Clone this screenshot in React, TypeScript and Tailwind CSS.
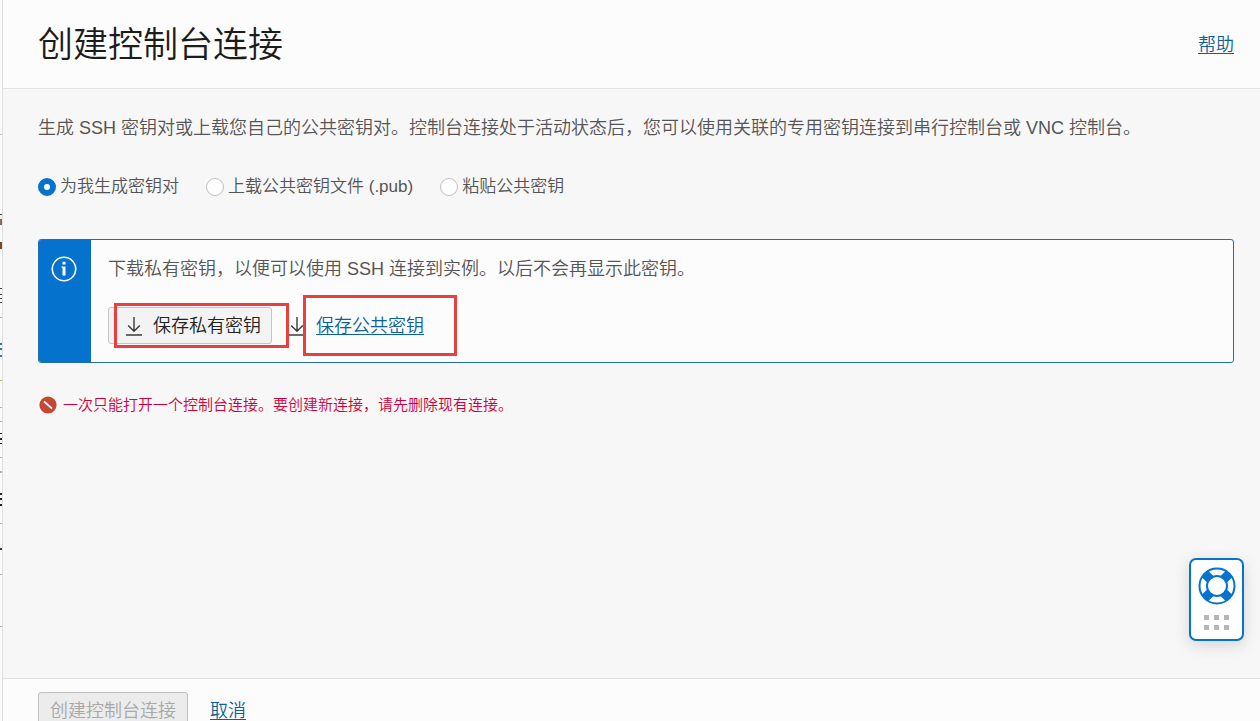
import { useState } from 'react'

const keyOptions = [
  { id: 'generate', label: '为我生成密钥对' },
  { id: 'upload', label: '上载公共密钥文件 (.pub)' },
  { id: 'paste', label: '粘贴公共密钥' },
]

// [y, height, colour] of what still shows of the page under the panel
const sliverMarks: [number, number, string][] = [
  [134, 1, '#c4c4c4'],
  [214, 1, '#444444'],
  [219, 6, '#8a6a58'],
  [242, 7, '#7a4a20'],
  [288, 1, '#444444'],
  [294, 1, '#444444'],
  [298, 1, '#444444'],
  [302, 1, '#444444'],
  [317, 1, '#b5b84a'],
  [343, 2, '#2f74b5'],
  [348, 2, '#2f74b5'],
  [355, 2, '#2f74b5'],
  [380, 1, '#b5b84a'],
  [407, 1, '#b0b0b0'],
  [421, 1, '#b0b0b0'],
  [433, 1, '#222222'],
  [438, 2, '#222222'],
  [443, 1, '#222222'],
  [457, 1, '#b0b0b0'],
  [471, 2, '#b0b0b0'],
  [493, 2, '#222222'],
  [498, 2, '#222222'],
  [504, 2, '#222222'],
  [523, 1, '#b0b0b0'],
  [548, 2, '#2b3b3b'],
  [574, 1, '#b0b0b0'],
  [626, 1, '#b0b0b0'],
]

function PageSliver() {
  return (
    <svg className="h-full w-[2px] shrink-0 bg-[#fbfbfb]" aria-hidden="true">
      {sliverMarks.map(([y, height, fill]) => (
        <rect key={y} x="0" y={y} width="2" height={height} fill={fill} />
      ))}
    </svg>
  )
}

function DownloadIcon() {
  return (
    <svg width="18" height="20" viewBox="0 0 18 20" fill="none" stroke="#3a3a3a" strokeWidth="1.4" className="shrink-0" aria-hidden="true">
      <path d="M9 1v14M3.2 9.4 9 15.2l5.8-5.8M1 19h16" />
    </svg>
  )
}

function InfoIcon() {
  return (
    <svg width="26" height="26" viewBox="0 0 26 26" fill="none" aria-hidden="true">
      <circle cx="13" cy="13" r="11.7" stroke="#fff" strokeWidth="1.6" />
      <path d="M11.5 5.8h3v2.8h-3zM10.6 10.4h3.9v9h-3v-7.4h-.9z" fill="#fff" />
    </svg>
  )
}

function ErrorIcon() {
  return (
    <svg width="18" height="18" viewBox="0 0 18 18" aria-hidden="true">
      <circle cx="9" cy="9" r="8.6" fill="#c74634" />
      <path d="m5 5.4 8 7.2" stroke="#fff" strokeWidth="1.9" />
    </svg>
  )
}

function LifebuoyIcon() {
  return (
    <svg width="38" height="38" viewBox="0 0 38 38" fill="none" stroke="#0572ce" aria-hidden="true">
      <path d="m7 7 6.5 6.5M31 7l-6.5 6.5M7 31l6.5-6.5M31 31l-6.5-6.5" strokeWidth="9" />
      <circle cx="19" cy="19" r="17.5" strokeWidth="2" />
      <circle cx="19" cy="19" r="10" fill="#fff" strokeWidth="2" />
    </svg>
  )
}

export default function App() {
  const [keyMode, setKeyMode] = useState('generate')

  return (
    <div className="flex h-screen overflow-hidden bg-[#f7f7f7] font-['Liberation_Sans','Noto_Sans_CJK_SC',sans-serif] text-[18px] leading-[26px] font-[350] text-[#555555]">
      <PageSliver />

      <div className="-mb-[21px] flex min-w-0 flex-1 flex-col border-l border-[#dedede]">
        {/* Header */}
        <header className="flex items-center justify-between border-b border-[#e3e3e3] bg-[#fcfcfc] pt-[19px] pr-[26px] pb-[17px] pl-[35px]">
          <h1 className="text-[35px] leading-[52px] font-[350] text-[#1c1c1c]">创建控制台连接</h1>
          <a href="#help" className="text-[#0b6198] underline underline-offset-2">帮助</a>
        </header>

        {/* Body */}
        <main className="flex-1 pt-[26px] pr-[26px] pl-[35px]">
          <p>
            生成 SSH 密钥对或上载您自己的公共密钥对。控制台连接处于活动状态后，您可以使用关联的专用密钥连接到串行控制台或 VNC 控制台。
          </p>

          <div role="radiogroup" className="mt-[33px] flex gap-[27px] text-[17px]">
            {keyOptions.map((option) => (
              <label key={option.id} className="flex items-center gap-1">
                <input
                  type="radio"
                  name="keyMode"
                  value={option.id}
                  checked={keyMode === option.id}
                  onChange={() => setKeyMode(option.id)}
                  className="size-[18px] shrink-0 appearance-none rounded-full border border-[#c0c0c0] bg-white checked:border-[6px] checked:border-[#0572ce]"
                />
                {option.label}
              </label>
            ))}
          </div>

          <section className="mt-[39px] flex overflow-hidden rounded-[3px] border border-[#1f72a8] bg-[#fcfcfc]">
            <div className="w-[52px] shrink-0 bg-[#0572ce] pt-4 pl-3">
              <InfoIcon />
            </div>
            <div className="px-[17px] pt-4 pb-[18px]">
              <p>下载私有密钥，以便可以使用 SSH 连接到实例。以后不会再显示此密钥。</p>
              <div className="mt-[25px] flex items-center gap-4">
                <div className="relative">
                  <button type="button" className="flex h-[37px] items-center gap-2.5 rounded-[3px] border border-[#c4c4c4] bg-[#f3f3f3] pr-2.5 pl-4 text-[#222222]">
                    <DownloadIcon />
                    保存私有密钥
                  </button>
                  <div className="pointer-events-none absolute -top-1 -right-[17px] -bottom-1 left-1.5 border-3 border-[#e8403f]" />
                </div>
                <div className="relative flex items-center gap-2.5">
                  <DownloadIcon />
                  <a href="#public-key" className="text-[#0b6198] underline underline-offset-2">保存公共密钥</a>
                  <div className="pointer-events-none absolute -top-[18px] -right-[33px] -bottom-[17px] left-[15px] border-3 border-[#e8403f]" />
                </div>
              </div>
            </div>
          </section>

          <p role="alert" className="mt-8 flex items-center gap-1.5 pl-px text-[15px] leading-5 text-[#d1003c]">
            <ErrorIcon />
            一次只能打开一个控制台连接。要创建新连接，请先删除现有连接。
          </p>
        </main>

        {/* Footer */}
        <footer className="flex items-center gap-[22px] border-t border-[#e3e3e3] bg-[#fcfcfc] pt-[13px] pb-3 pl-[35px]">
          <button type="button" disabled className="h-[38px] rounded-[3px] border border-[#c0c0c0] bg-[#ececec] px-[11px] text-[#a8a8a8]">
            创建控制台连接
          </button>
          <a href="#cancel" className="text-[#0b6198] underline underline-offset-2">取消</a>
        </footer>
      </div>

      {/* Support widget */}
      <button
        type="button"
        aria-label="支持"
        className="fixed right-4 bottom-20 flex h-[83px] w-[55px] flex-col items-center gap-2.5 rounded-[7px] border-2 border-[#0572ce] bg-white pt-[7px] shadow-[0_4px_16px_rgba(0,0,0,0.14)]"
      >
        <LifebuoyIcon />
        <span className="grid grid-cols-3 gap-[5px]">
          {[0, 1, 2, 3, 4, 5].map((dot) => (
            <span key={dot} className="size-[5px] bg-[#b4b6ba]" />
          ))}
        </span>
      </button>
    </div>
  )
}
